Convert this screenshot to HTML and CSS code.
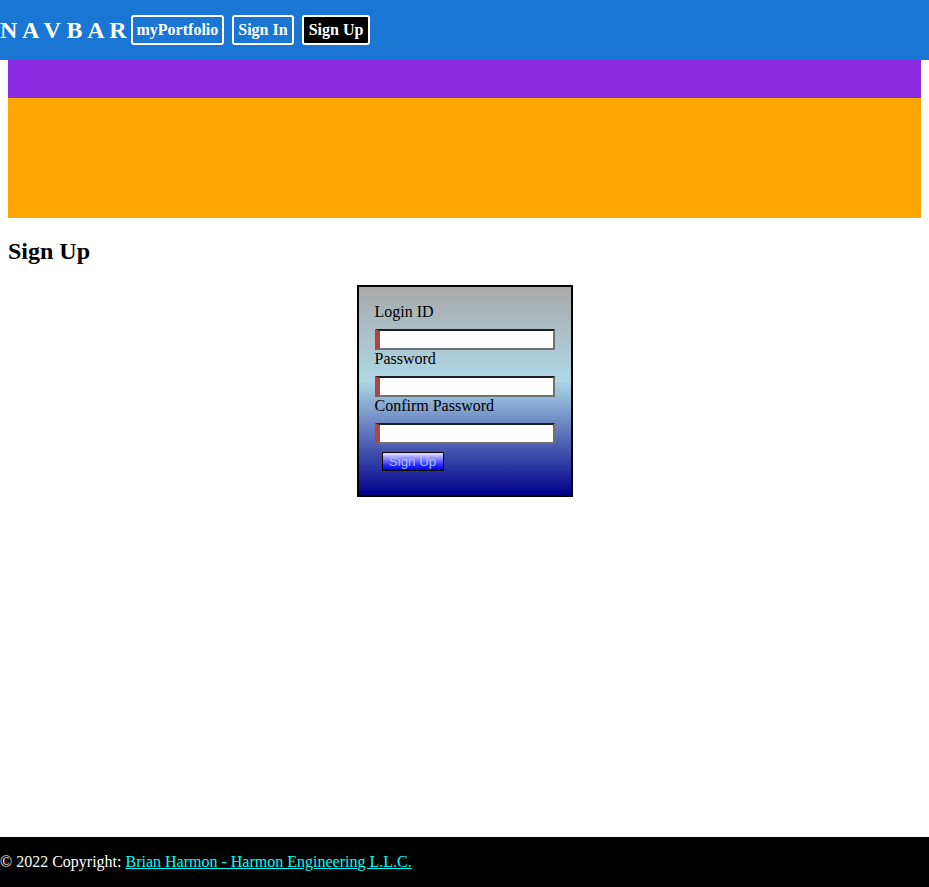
FILE: index.html
```html
<!DOCTYPE html>
<html>
<head>
<meta charset="utf-8">
<title>Sign Up</title>
<link rel="stylesheet" href="styles.css">
</head>
<body>
<nav class="navbar">
  <span class="brand">N A V B A R</span>
  <a class="nav-btn" href="#">myPortfolio</a>
  <a class="nav-btn" href="#">Sign In</a>
  <a class="nav-btn active" href="#">Sign Up</a>
</nav>
<main class="main">
  <div class="band-purple"></div>
  <div class="band-orange"></div>
  <h2 class="title">Sign Up</h2>
  <form class="signup">
    <label class="lbl">Login ID</label>
    <input class="field" type="text">
    <label class="lbl">Password</label>
    <input class="field" type="password">
    <label class="lbl">Confirm Password</label>
    <input class="field" type="password">
    <button class="submit" type="button">Sign Up</button>
  </form>
</main>
<footer class="footer">
  <span>© 2022 Copyright: <a class="footer-link" href="#">Brian Harmon - Harmon Engineering L.L.C.</a></span>
</footer>
</body>
</html>
```
FILE: styles.css
```css
html, body {
  margin: 0;
  padding: 0;
  height: 100%;
}
body {
  font-family: "Liberation Serif", "Times New Roman", serif;
  font-size: 16px;
  display: flex;
  flex-direction: column;
  min-height: 100vh;
}
.navbar {
  height: 60px;
  background: #1976d2;
  display: flex;
  align-items: center;
  gap: 8px;
  flex-shrink: 0;
}
.brand {
  color: #fff;
  font-weight: bold;
  font-size: 24px;
  margin-right: -4px;
}
.nav-btn {
  color: #fff;
  text-decoration: none;
  font-weight: bold;
  font-size: 16px;
  border: 2px solid #fff;
  border-radius: 3px;
  padding: 0 4px;
  height: 26px;
  line-height: 26px;
}
.nav-btn.active {
  background: #000;
  padding: 0 5px;
}
.main {
  flex: 1;
  padding: 0 8px;
  display: flex;
  flex-direction: column;
}
.band-purple {
  height: 38px;
  background: #8a2be2;
}
.band-orange {
  height: 120px;
  background: #ffa500;
}
.title {
  font-size: 24px;
  font-weight: bold;
  margin: 20px 0 20px 0;
  line-height: 27px;
}
.signup {
  align-self: center;
  width: 180px;
  border: 2px solid #000;
  padding: 16px 16px 24px 16px;
  background: linear-gradient(to bottom, #a9a9a9 0%, #add8e6 45%, #00008b 100%);
  display: flex;
  flex-direction: column;
  align-items: flex-start;
}
.lbl {
  display: block;
  line-height: 18px;
  margin-bottom: 8px;
}
.field {
  box-sizing: border-box;
  width: 180px;
  height: 21px;
  margin: 0;
  padding: 0;
  background: #fff;
  border-style: solid;
  border-width: 2px 2px 2px 5px;
  border-color: #1f1f1f #707070 #707070 #b04444;
}
.submit {
  margin-top: 8px;
  margin-left: 7px;
  width: 62px;
  height: 19px;
  padding: 0;
  border: 1px solid #000;
  background: linear-gradient(to bottom, #e8e0ff 0%, #2a2aff 70%, #0000ee 100%);
  color: #a8c4ff;
  font-family: "Liberation Sans", Arial, sans-serif;
  font-size: 13.33px;
  line-height: 17px;
}
.footer {
  height: 50px;
  background: #000;
  color: #fff;
  display: flex;
  align-items: center;
  flex-shrink: 0;
}
.footer-link {
  color: #00ffff;
}
```
